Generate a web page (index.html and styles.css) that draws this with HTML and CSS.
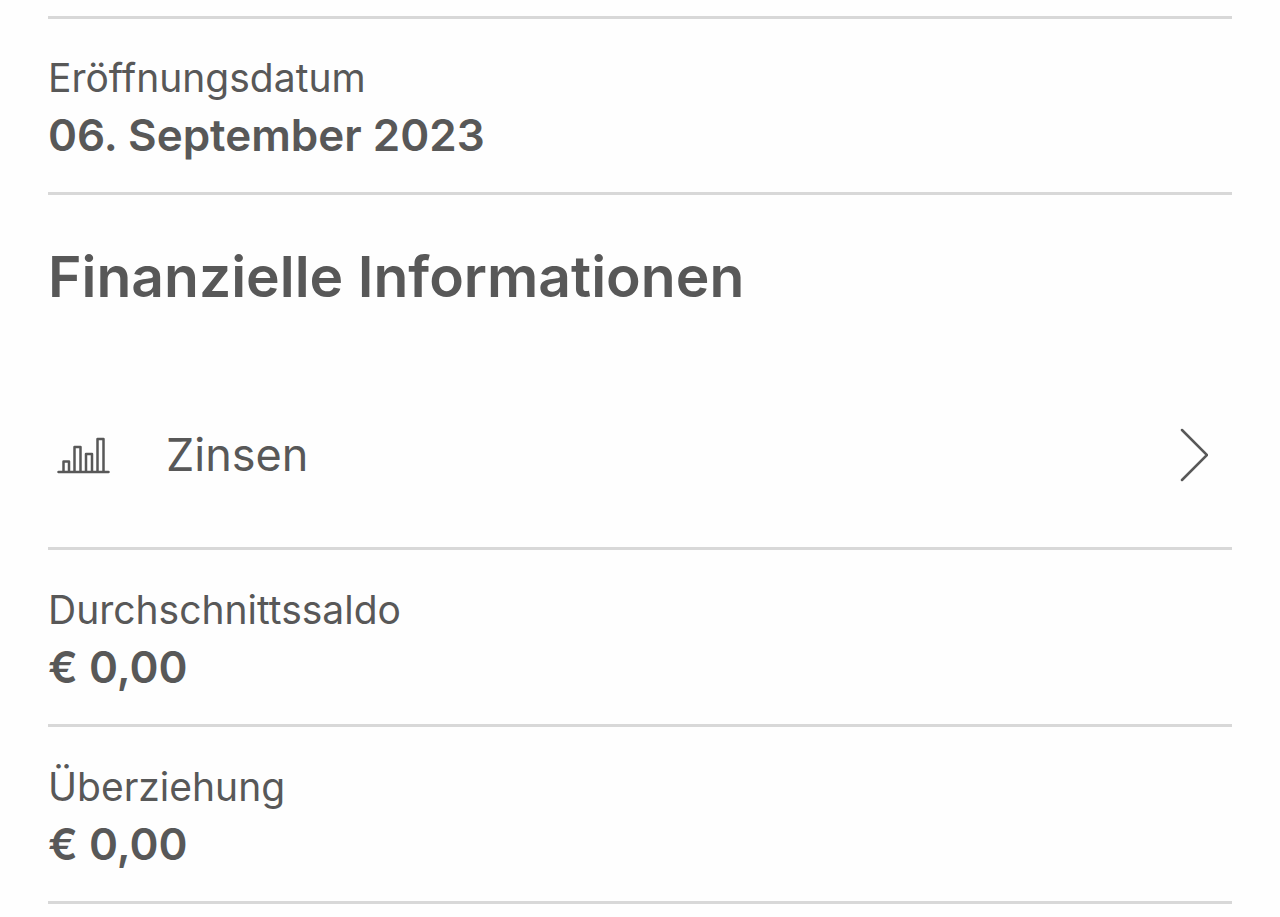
FILE: index.html
```html
<!DOCTYPE html>
<html lang="de">
<head>
<meta charset="utf-8">
<meta name="viewport" content="width=device-width, initial-scale=1">
<title>Finanzielle Informationen</title>
<link rel="stylesheet" href="styles.css">
</head>
<body>
<main class="details">
  <dl class="entry entry-first">
    <dt class="label">Eröffnungsdatum</dt>
    <dd class="value">06. September 2023</dd>
  </dl>
  <section>
    <h2 class="heading">Finanzielle Informationen</h2>
    <button class="link-row" type="button">
      <svg class="chart-icon" viewBox="0 0 54 38" aria-hidden="true">
        <path d="M2.500 36H52.500M7.500 36V25.500H13V36M18.500 36V11H24.500V36M30 36V18H36V36M41.500 36V3H47.500V36"/>
      </svg>
      <span class="link-text">Zinsen</span>
      <svg class="chevron" viewBox="0 0 30 56" aria-hidden="true">
        <path d="M4 3L29 28L4 53"/>
      </svg>
    </button>
    <dl class="entry">
      <dt class="label">Durchschnittssaldo</dt>
      <dd class="value">€ 0,00</dd>
    </dl>
    <dl class="entry">
      <dt class="label">Überziehung</dt>
      <dd class="value">€ 0,00</dd>
    </dl>
  </section>
</main>
</body>
</html>
```
FILE: styles.css
```css
body {
  margin: 0;
  background: #fefefe;
  color: #585858;
  font-family: Inter, "Liberation Sans", sans-serif;
}

.details {
  padding: 16px 48px 12px;
}

.entry {
  margin: 0;
  padding: 32px 0 28px;
  border-bottom: 3px solid #d8d8d8;
}

.entry-first {
  padding: 31px 0 28px;
  border-top: 3px solid #d8d8d8;
}

.label {
  font-size: 39px;
  font-weight: 400;
  line-height: 56px;
}

.value {
  margin: 0;
  font-size: 44px;
  font-weight: 600;
  line-height: 58px;
}

.heading {
  margin: 0;
  padding: 48px 0;
  font-size: 57px;
  font-weight: 600;
  line-height: 68px;
}

.link-row {
  display: flex;
  align-items: center;
  width: 100%;
  padding: 63px 24px 59px 8px;
  border: 0;
  border-bottom: 3px solid #d8d8d8;
  background: none;
  color: inherit;
  font: inherit;
  text-align: left;
  cursor: pointer;
}

.link-text {
  flex: 1;
  margin-left: 56px;
  font-size: 45px;
  font-weight: 400;
  line-height: 66px;
}

.chart-icon {
  width: 54px;
  height: 38px;
  fill: none;
  stroke: #585858;
  stroke-width: 2.5;
  stroke-linecap: round;
  stroke-linejoin: round;
}

.chevron {
  width: 30px;
  height: 56px;
  fill: none;
  stroke: #585858;
  stroke-width: 2.5;
  stroke-linecap: round;
}
```
